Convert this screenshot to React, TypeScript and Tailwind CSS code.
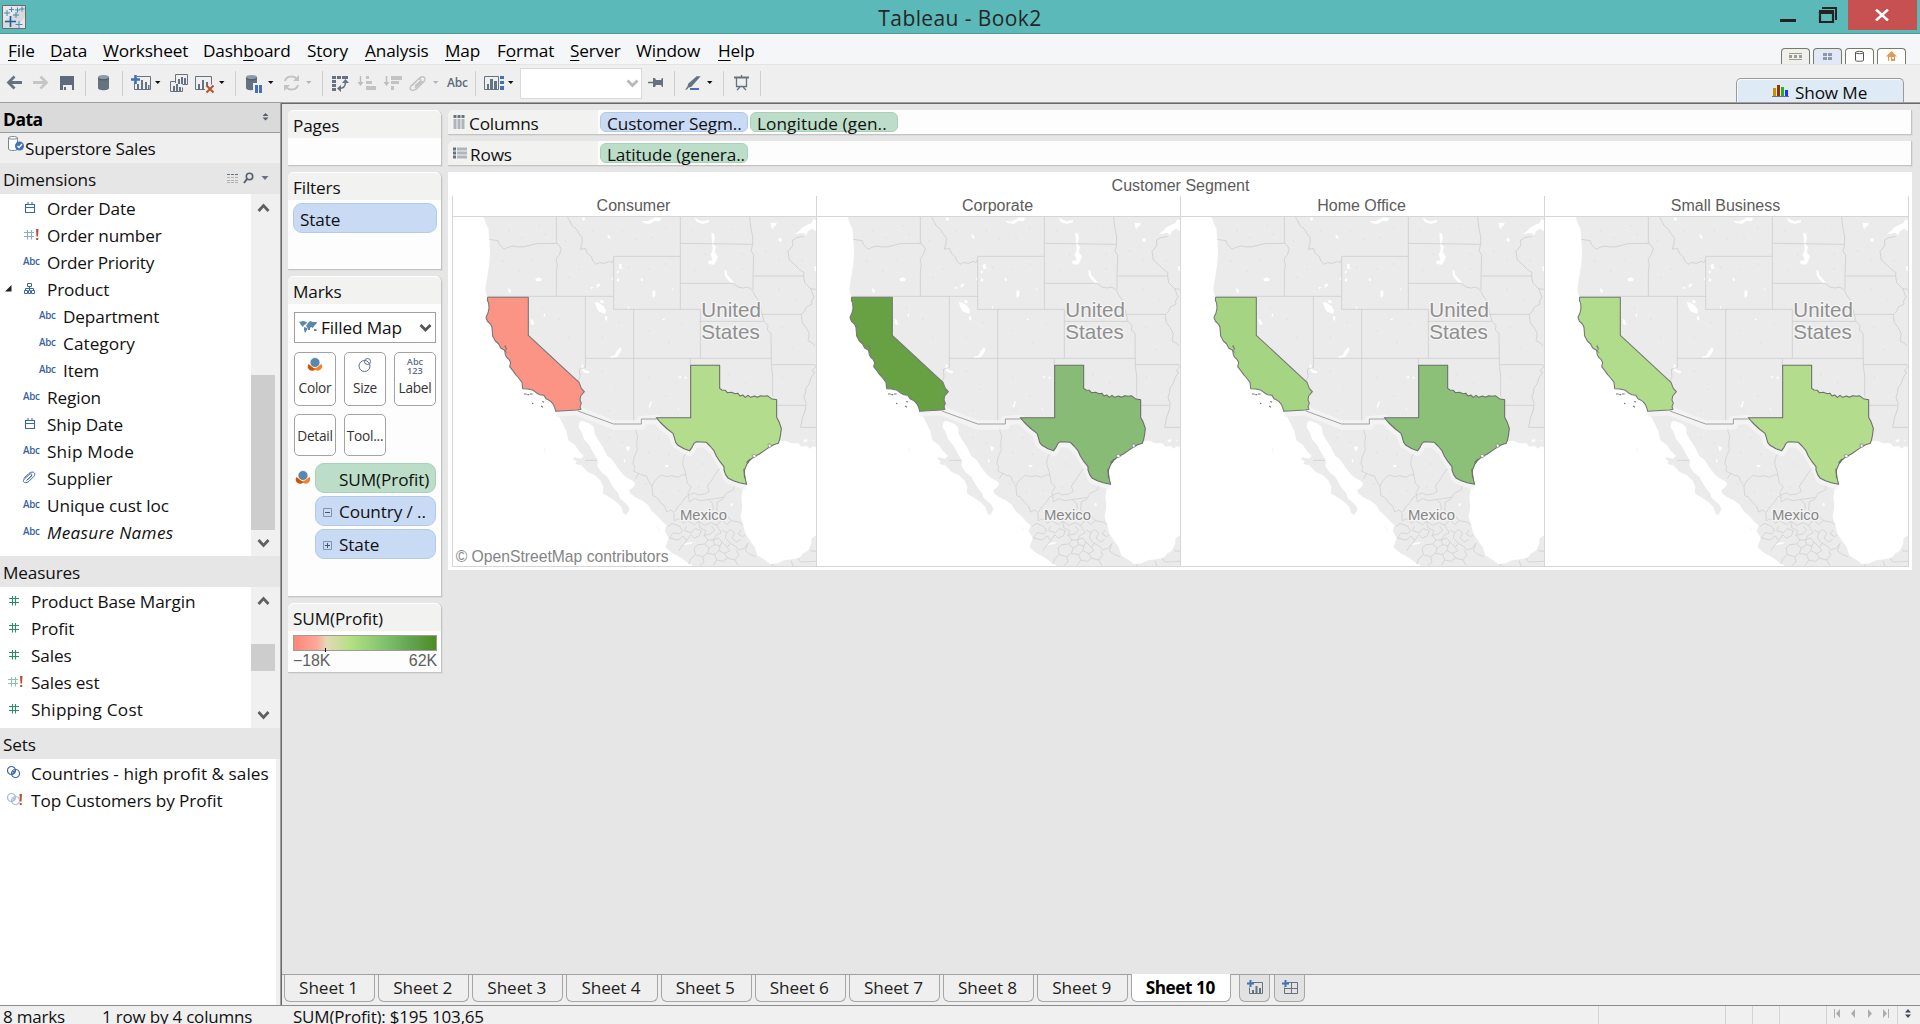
import React from "react";

const UI = "font-['Open_Sans','Noto_Sans',sans-serif]";
const ARIAL = "font-['Liberation_Sans',Arial,sans-serif]";

/* ---------- menu ---------- */

const MENU: [string, string, string, string][] = [
  ["", "F", "ile", "w-[42px]"],
  ["", "D", "ata", "w-[53px]"],
  ["", "W", "orksheet", "w-[100px]"],
  ["Dash", "b", "oard", "w-[104px]"],
  ["S", "t", "ory", "w-[58px]"],
  ["", "A", "nalysis", "w-[80px]"],
  ["", "M", "ap", "w-[52px]"],
  ["F", "o", "rmat", "w-[73px]"],
  ["", "S", "erver", "w-[66px]"],
  ["Wi", "n", "dow", "w-[82px]"],
  ["", "H", "elp", "w-[60px]"],
];

function MenuBar() {
  return (
    <div className="flex h-[31px] items-center border-b border-[#e4e4e6] bg-[#f5f6f8] pl-2">
      {MENU.map(([a, b, c, w]) => (
        <div key={b + c} className={`${w} mt-[3px] shrink-0 whitespace-nowrap text-[17.200px] leading-[22px] tracking-[-0.120px] text-black`}>
          {a}
          <span className="underline decoration-1 underline-offset-[3px]">{b}</span>
          {c}
        </div>
      ))}
      <div className="ml-auto mr-[14px] flex items-end gap-[3px] self-end">
        <ViewTab className="bg-[#efefed]">
          <path d="M8 5.500h13M8 11.500h13" stroke="#9b9c8b" />
          <path d="M8 7h3v3h-3zM13 7h3v3h-3zM18 7h3v3h-3z" fill="#9b9c8b" />
        </ViewTab>
        <ViewTab className="bg-[#e2e8f5]">
          <path d="M10 5h4v3h-4zM15 5h4v3h-4zM10 9h4v3h-4zM15 9h4v3h-4z" fill="#8c99a8" />
        </ViewTab>
        <ViewTab className="bg-white">
          <path d="M10.500 4.500v8c0 1 8 1 8 0v-8M10.500 4.500c0-1.500 8-1.500 8 0s-8 1.500-8 0" stroke="#555" fill="none" />
        </ViewTab>
        <ViewTab className="bg-white">
          <path d="M14.500 3l5.500 5.500h-2v4.500h-7v-4.500h-2z" fill="#e9964f" />
          <path d="M12 9h2v4h-2zM15 9h2v2h-2z" fill="#fff" />
        </ViewTab>
      </div>
    </div>
  );
}

function ViewTab({ className, children }: { className: string; children: React.ReactNode }) {
  return (
    <div className={`h-4 w-[29px] rounded-t-[4px] border border-b-0 border-[#77796b] ${className}`}>
      <svg width="29" height="16" viewBox="1 1 29 16" className="block">{children}</svg>
    </div>
  );
}

/* ---------- toolbar ---------- */

function Tool({ x, w, children }: { x: number; w: number; children?: React.ReactNode }) {
  return (
    <svg width={w} height="37" viewBox={`${x} 65 ${w} 37`} className="block shrink-0" fill="none">
      {children}
    </svg>
  );
}

const Sep = ({ x }: { x: number }) => <path d={`M${x + 0.5} 71v25`} stroke="#cfcfcf" />;
const Caret = ({ x, c = "#111" }: { x: number; c?: string }) => <path d={`M${x - 2.500} 81h5.500l-2.750 3z`} fill={c} />;
const Cylinder = ({ x }: { x: number }) => (
  <>
    <path d={`M${x} 77v11c0 3 11 3 11 0v-11z`} fill="#66727f" />
    <ellipse cx={x + 5.5} cy="77" rx="5.500" ry="2" fill="#8d99a6" />
    <path d={`M${x} 78c1 2.500 10 2.500 11 0`} stroke="#4d5866" />
  </>
);

function Toolbar() {
  return (
    <div className="flex h-[37px] bg-[#efefef]">
      <Tool x={0} w={27}><path d="M22 82.500h-13M14.500 76.500l-6 6 6 6" stroke="#66727f" strokeWidth="2.800" /></Tool>
      <Tool x={27} w={28}><path d="M33 82.500h13M40.500 76.500l6 6-6 6" stroke="#c6c6c6" strokeWidth="2.800" /></Tool>
      <Tool x={55} w={33}>
        <path d="M60 76h14v14h-14z" fill="#5f6b7b" /><path d="M63 85h9v5h-9z" fill="#efefef" /><path d="M64 87h2v3h-2z" fill="#5f6b7b" />
        <Sep x={85} />
      </Tool>
      <Tool x={88} w={37}><Cylinder x={98} /><Sep x={122} /></Tool>
      <Tool x={125} w={40}>
        <path d="M137 76.500h13.500v13h-16v-7" stroke="#66727f" />
        <path d="M137 84h2v5h-2zM141 80h2v9h-2zM145 82h2v7h-2zM148 85h1.500v4h-1.500z" fill="#66727f" />
        <path d="M135.500 75v9M131 79.500h9" stroke="#4370b8" strokeWidth="2.600" /><Caret x={157.5} />
      </Tool>
      <Tool x={165} w={27}>
        <path d="M175.500 83v-8.500h12v10h-5" stroke="#66727f" /><path d="M178 79h2v5h-2zM181 77h2v7h-2zM184 78h2v6h-2z" fill="#66727f" />
        <path d="M175 81.500h-4.500v10h12v-4" stroke="#66727f" /><path d="M173 86h2v5h-2zM176 84h2v7h-2zM179 87h2v4h-2z" fill="#66727f" />
      </Tool>
      <Tool x={192} w={46}>
        <path d="M205 89.500h-9.500v-13h16v8" stroke="#66727f" /><path d="M198 84h2v5h-2zM202 80h2v9h-2zM206 82h2v4h-2z" fill="#66727f" />
        <path d="M206.500 85.500l7 7M213.500 85.500l-7 7" stroke="#b8502f" strokeWidth="2" /><Caret x={221.5} /><Sep x={235} />
      </Tool>
      <Tool x={238} w={40}>
        <Cylinder x={246} /><path d="M253 83h10v10h-10z" fill="#efefef" /><path d="M255 85h3v8h-3zM259 85h3v8h-3z" fill="#4370b8" /><Caret x={270.5} />
      </Tool>
      <Tool x={278} w={47}>
        <path d="M285 81c1-5 9-6 12-2M298 85c-1 5-9 6-12 2" stroke="#c3c3c3" strokeWidth="2" />
        <path d="M299 75v6h-6zM284 91v-6h6z" fill="#c3c3c3" /><Caret x={308.5} c="#b5b5b5" /><Sep x={322} />
      </Tool>
      <Tool x={325} w={28}>
        <path d="M332 76h4v3h-4zM337 76h4v3h-4zM342 76h6v3h-6zM332 80h4v3h-4zM332 84h4v3h-4zM332 88h4v3h-4z" fill="#66727f" />
        <path d="M338.500 88.500c4 0 7-1 7-6" stroke="#66727f" strokeWidth="1.500" /><path d="M342 83l3.500-4 3.500 4zM341 85v7l-4-3.500z" fill="#66727f" />
      </Tool>
      <Tool x={353} w={27}>
        <path d="M360.500 76v8" stroke="#bdbdbd" strokeWidth="1.500" /><path d="M357.500 82h6l-3 4z" fill="#bdbdbd" />
        <path d="M366 76h3v3h-3zM366 81h6v3h-6zM366 86h10v4h-10z" fill="#c3c3c3" />
      </Tool>
      <Tool x={380} w={26}>
        <path d="M386.500 76v8" stroke="#bdbdbd" strokeWidth="1.500" /><path d="M383.500 82h6l-3 4z" fill="#bdbdbd" />
        <path d="M391 76h11v4h-11zM391 81h8v3h-8zM391 86h3v4h-3z" fill="#c3c3c3" />
      </Tool>
      <Tool x={406} w={37}>
        <path d="M415 88l7.500-7M412 85.500l7-7c4-3.500 8-1 5 3l-7 7c-4 3.500-9 1.500-6-2.500l7-6.500c2-1.500 4 0 2 2l-5 4.500" stroke="#bfbfbf" strokeWidth="1.300" /><Caret x={435.5} c="#b5b5b5" />
      </Tool>
      <div className="w-[32px] shrink-0 pl-1 text-[12px] font-semibold leading-[36px] tracking-[-0.200px] text-[#5d6a79]">Abc</div>
      <Tool x={475} w={45}>
        <Sep x={475} /><path d="M484.500 76.500h14v13h-14z" stroke="#66727f" />
        <path d="M487 84h2v5h-2zM490 79h3v10h-3zM494 81h3v8h-3z" fill="#66727f" />
        <path d="M500 76h4v3h-4zM500 81h4v3h-4zM500 86h4v4h-4z" fill="#4370b8" /><Caret x={510.5} />
      </Tool>
      <div className="mt-[3px] flex h-[31px] w-[122px] shrink-0 justify-end border border-[#d9d9d9] bg-white">
        <svg width="16" height="29" viewBox="0 0 16 29" fill="none"><path d="M2.500 11.500l5 5 5-5" stroke="#b9b9b9" strokeWidth="2.800" /></svg>
      </div>
      <Tool x={642} w={35}>
        <path d="M648 82.500h7" stroke="#66727f" strokeWidth="1.500" /><path d="M653 78h2l1 2h5l1-2h1v9h-1l-1-2h-5l-1 2h-2z" fill="#66727f" /><Sep x={674} />
      </Tool>
      <Tool x={677} w={49}>
        <path d="M699 77l-8 9-3 1 1-3 8-7z" fill="#66727f" stroke="#66727f" strokeWidth="1.500" /><path d="M685 90l2-3 1 2z" fill="#66727f" />
        <path d="M690 89h9" stroke="#4370b8" strokeWidth="2" /><Caret x={709.5} /><Sep x={723} />
      </Tool>
      <Tool x={726} w={37}>
        <path d="M734 77.500h15" stroke="#66727f" strokeWidth="2" />
        <path d="M736.500 78v8.500h10v-8.500M741.500 75v2M740 87l-3 3M743 87l3 3" stroke="#66727f" strokeWidth="1.300" /><Sep x={760} />
      </Tool>
      <div className="ml-auto mr-4 mt-[13px] flex h-6 w-[168px] items-end rounded-t-[5px] border border-b-0 border-[#9b9b9b] bg-[#deeaf5] pl-[34px] shadow-[inset_1px_1px_0_#f6fafd]">
        <svg width="18" height="14" viewBox="0 0 18 14" className="mb-[4px]">
          <path d="M2 4h3v8h-3z" fill="#c29200" /><path d="M6 1h3v11h-3z" fill="#a32c00" /><path d="M10 3h3v9h-3z" fill="#22b222" /><path d="M14 6h3v6h-3z" fill="#2430ff" />
          <path d="M1 12.500h17" stroke="#6a7180" />
        </svg>
        <span className="-mb-px ml-[6px] whitespace-nowrap text-[17.200px] leading-[20px] tracking-[-0.150px] text-[#0d0d0d]">Show Me</span>
      </div>
    </div>
  );
}

/* ---------- data pane ---------- */

type IconKind = "date" | "num!" | "abc" | "tree" | "clip" | "num" | "set" | "set!";

function FieldIcon({ kind, green }: { kind: IconKind; green?: boolean }) {
  const c = green ? "#2f8a68" : "#3b66a8";
  if (kind === "abc") return <span className="block w-5 text-[9.800px] font-semibold leading-[14px] tracking-[-0.350px] text-[#3863a3]">Abc</span>;
  return (
    <svg width="20" height="16" viewBox="0 0 20 16" fill="none" className="block">
      {kind === "date" && <path d="M2.500 4.500h9v8h-9zM2 7.500h10M5 2v3M9 2v3" stroke={c} strokeWidth="1.100" />}
      {kind === "num" && <path d="M4.500 3v9.500M7.500 3v9.500M1 5.500h10M1 9.500h10" stroke={c} strokeWidth="1.100" />}
      {kind === "num!" && (
        <>
          <path d="M3.500 3v9.500M7.500 3v9.500M0 5.500h10M0 9.500h10" stroke={green ? "#8fc0ad" : "#8fa9d3"} strokeWidth="1.100" />
          <path d="M12 2h2.500l-0.500 7.500h-1.500zM12.200 11h2v2h-2z" fill="#b8502f" />
        </>
      )}
      {kind === "tree" && <path d="M4.500 2.500h4v3h-4zM1.500 9.500h3v3h-3zM5.500 9.500h2v3h-2zM8.500 9.500h3v3h-3zM6.500 5.500v4M2.500 9.500v-2h8v2" stroke={c} />}
      {kind === "clip" && (
        <path d="M3.500 10.500l5.500-5M0.800 8.500l5-5c3.500-3 8-1 5 3l-5 5c-3.500 2.500-7 0.500-4.500-2.500l5-4.500c2-1.500 3.500 0 2 1.500l-4 4" stroke={c} />
      )}
      {(kind === "set" || kind === "set!") && (
        <g stroke={kind === "set" ? "#3b66a8" : "#a9bbd8"} strokeWidth="1.200">
          <circle cx="4.500" cy="5.500" r="4" /><circle cx="8.500" cy="8.500" r="4" />
          <path d="M5 7l3-1M5.500 9l2.500-2" />
        </g>
      )}
      {kind === "set!" && <path d="M12.500 2h2.500l-0.500 7.500h-1.500zM12.700 11h2v2h-2z" fill="#b8502f" />}
    </svg>
  );
}

function Field({ kind, label, pad, textW, italic, open, green, track = "tracking-[-0.130px]" }: {
  kind: IconKind; label: string; pad: string; textW: string; italic?: boolean; open?: boolean; green?: boolean; track?: string;
}) {
  return (
    <div className={`relative flex h-[27px] items-center ${pad}`}>
      {open && <svg width="7" height="7" className="absolute left-[5px] top-[9px]"><path d="M6.500 0v6.500h-6.500z" fill="#222" /></svg>}
      <div className={`${textW} -mt-px shrink-0`}><FieldIcon kind={kind} green={green} /></div>
      <span className={`whitespace-nowrap text-[17.200px] leading-[26px] text-[#111] ${track} ${italic ? "italic" : ""}`}>{label}</span>
    </div>
  );
}

function ScrollBar({ thumb }: { thumb: string }) {
  return (
    <div className="relative flex w-[29px] shrink-0 flex-col justify-between bg-[#f0f0f0] pl-[6px]">
      <div className={`absolute left-0 w-6 bg-[#cdcdcd] ${thumb}`} />
      <svg width="13" height="12" className="mt-[8px]" fill="none"><path d="M1.500 9l5-5.500 5 5.500" stroke="#606060" strokeWidth="2.800" /></svg>
      <svg width="13" height="12" className="mb-[7px]" fill="none"><path d="M1.500 3l5 5.500 5-5.500" stroke="#606060" strokeWidth="2.800" /></svg>
    </div>
  );
}

function SectionHead({ children }: { children: React.ReactNode }) {
  return <div className="flex h-[31px] shrink-0 items-center bg-[#e6e6e6] pl-[3px] pt-[2px] text-[17.200px] leading-[29px] tracking-[-0.150px] text-[#111]">{children}</div>;
}

function DataPane() {
  return (
    <div className="flex w-[282px] shrink-0 border-r border-[#696969]">
      <div className="flex w-[281px] flex-col border-r border-[#a0a0a0] bg-[#f0f0f0]">
        <div className="flex h-[30px] shrink-0 items-center justify-between border-b border-[#9a9a9a] bg-[#dadada] pl-[3px] pr-[11px]">
          <span className="mt-[2px] text-[17.500px] font-bold leading-[26px] tracking-[-0.500px] text-black">Data</span>
          <svg width="7" height="8" className="mb-[2px]"><path d="M3.500 0l3 3h-6zM3.500 7.500l3-3h-6z" fill="#555f6c" /></svg>
        </div>
        <div className="flex h-[30px] shrink-0 items-center bg-[#efefef] pl-[7px]">
          <svg width="18" height="18" viewBox="0 0 18 18" className="mb-[8px]" fill="none">
            <path d="M1.500 3v11c0 2 9 2 9 0v-11c0-2-9-2-9 0c0 1.500 9 1.500 9 0" stroke="#7d8794" fill="#fff" />
            <circle cx="12.500" cy="11" r="4.500" fill="#4370b8" /><path d="M10.500 11l1.500 1.500 3-3.500" stroke="#fff" strokeWidth="1.200" />
          </svg>
          <span className="mt-[1px] whitespace-nowrap text-[17.200px] leading-[28px] tracking-[-0.220px] text-[#111]">Superstore Sales</span>
        </div>
        <SectionHead>
          Dimensions
          <svg width="44" height="14" viewBox="0 0 44 14" className="mb-[4px] ml-auto mr-[10px]" fill="none">
            <path d="M1 3.500h12" stroke="#66727f" strokeDasharray="3 1" />
            <path d="M1 6.500h12M1 9.500h12M1 11.500h12" stroke="#b2b2b2" strokeDasharray="3 1" />
            <circle cx="23.500" cy="5.500" r="3.200" stroke="#56616f" strokeWidth="1.600" /><path d="M21 8l-3 4" stroke="#56616f" strokeWidth="2" />
            <path d="M35.500 5h7l-3.500 4z" fill="#66727f" />
          </svg>
        </SectionHead>
        <div className="flex h-[362px] shrink-0 bg-white">
          <div className="flex-1 pt-[1px]">
            <Field kind="date" label="Order Date" pad="pl-[23px]" textW="w-6" />
            <Field kind="num!" label="Order number" pad="pl-[24px]" textW="w-[23px]" />
            <Field kind="abc" label="Order Priority" pad="pl-[23px]" textW="w-6" track="tracking-[-0.220px]" />
            <Field kind="tree" label="Product" pad="pl-[23px]" textW="w-6" open />
            <Field kind="abc" label="Department" pad="pl-[39px]" textW="w-6" />
            <Field kind="abc" label="Category" pad="pl-[39px]" textW="w-6" track="tracking-[0.050px]" />
            <Field kind="abc" label="Item" pad="pl-[39px]" textW="w-6" />
            <Field kind="abc" label="Region" pad="pl-[23px]" textW="w-6" />
            <Field kind="date" label="Ship Date" pad="pl-[23px]" textW="w-6" />
            <Field kind="abc" label="Ship Mode" pad="pl-[23px]" textW="w-6" track="tracking-[0.200px]" />
            <Field kind="clip" label="Supplier" pad="pl-[23px]" textW="w-6" />
            <Field kind="abc" label="Unique cust loc" pad="pl-[23px]" textW="w-6" track="tracking-[-0.080px]" />
            <Field kind="abc" label="Measure Names" pad="pl-[23px]" textW="w-6" italic track="tracking-[0.300px]" />
          </div>
          <ScrollBar thumb="top-[181px] h-[155px]" />
        </div>
        <SectionHead>Measures</SectionHead>
        <div className="flex h-[141px] shrink-0 bg-white">
          <div className="flex-1 pt-[1px]">
            <Field kind="num" label="Product Base Margin" pad="pl-[8px]" textW="w-[23px]" green />
            <Field kind="num" label="Profit" pad="pl-[8px]" textW="w-[23px]" green />
            <Field kind="num" label="Sales" pad="pl-[8px]" textW="w-[23px]" green />
            <Field kind="num!" label="Sales est" pad="pl-[8px]" textW="w-[23px]" green />
            <Field kind="num" label="Shipping Cost" pad="pl-[8px]" textW="w-[23px]" green track="tracking-[0.200px]" />
          </div>
          <ScrollBar thumb="top-[57px] h-[27px]" />
        </div>
        <SectionHead>Sets</SectionHead>
        <div className="mr-1 flex-1 bg-white pt-[1px]">
          <Field kind="set" label="Countries - high profit & sales" pad="pl-[7px]" textW="w-6" track="tracking-[0.030px]" />
          <Field kind="set!" label="Top Customers by Profit" pad="pl-[7px]" textW="w-6" track="tracking-[-0.090px]" />
        </div>
      </div>
    </div>
  );
}

/* ---------- cards ---------- */

function Card({ title, className, children }: { title: string; className: string; children?: React.ReactNode }) {
  return (
    <div className={`flex w-[154px] shrink-0 flex-col rounded-t-[6px] border-b border-r border-[#c3c3c3] bg-[#fdfdfd] shadow-[1px_1px_0_#dcdcdc] ${className}`}>
      <div className="h-[28px] shrink-0 rounded-t-[6px] border-t border-white bg-[#f2f2f0] pl-[5px] text-[17.200px] leading-[30px] tracking-[-0.150px] text-[#111]">{title}</div>
      {children}
    </div>
  );
}

function Pill({ label, className, icon }: { label: string; className: string; icon?: React.ReactNode }) {
  return (
    <div className={`flex shrink-0 items-center whitespace-nowrap border text-[17.200px] tracking-[-0.120px] text-[#111] ${className}`}>
      {icon}
      {label}
    </div>
  );
}

const BLUE = "bg-[#c9daf5] border-[#b3c9ea]";
const GREEN = "bg-[#bcdec9] border-[#a9d0b8]";

const ColorDots = () => (
  <svg width="16" height="16" viewBox="0 0 16 16">
    <path d="M1.500 7a4.200 4.200 0 1 0 7 5z" fill="#d35400" />
    <path d="M14.500 7a4.200 4.200 0 1 1 -7.500 4.500z" fill="#f58025" />
    <circle cx="8" cy="5.500" r="5" fill="#5a88ad" stroke="#fdfdfd" strokeWidth="0.800" />
  </svg>
);

function MarkButton({ label, className, children }: { label: string; className: string; children?: React.ReactNode }) {
  return (
    <div className={`flex w-[42px] flex-col items-center rounded-[5px] border border-[#a3a3a3] bg-white ${className}`}>
      {children}
      <span className="whitespace-nowrap text-[13.700px] leading-[18px] tracking-[-0.250px] text-[#333]">{label}</span>
    </div>
  );
}

const Box = ({ plus }: { plus?: boolean }) => (
  <svg width="9" height="9" className="mr-[7px]" fill="none">
    <path d="M0.500 0.500h8v8h-8z" stroke="#8492ab" /><path d={plus ? "M2 4.500h5M4.500 2v5" : "M2 4.500h5"} stroke="#44536b" />
  </svg>
);

function CardColumn() {
  return (
    <div className="flex w-[154px] shrink-0 flex-col gap-[6px]">
      <Card title="Pages" className="h-[56px]" />
      <Card title="Filters" className="h-[98px]">
        <Pill label="State" className={`ml-[5px] mt-[3px] h-[30px] w-[144px] rounded-[9px] pl-[6px] pt-[3px] ${BLUE}`} />
      </Card>
      <Card title="Marks" className="h-[321px]">
        <div className="ml-[6px] mt-[8px] flex h-[31px] w-[142px] shrink-0 items-center border border-[#a0a0a0] bg-white pl-[4px]">
          <svg width="19" height="12" viewBox="0 0 19 12" fill="#5a88ad" className="mb-[2px]">
            <path d="M0 1l4-1 4 1-1 2-2 1-1 2-2-2-1-2zM5 6l3 1 0 2-2 3-1-3zM9 2l2-2 3 1 4 0-1 2-2 2-1 2-2-1-1 1 0 2-2 0-1-3-1-1zM15 8l2 0 1 2-3 0z" />
          </svg>
          <span className="ml-[3px] mt-[1px] text-[17.200px] tracking-[-0.120px] text-[#111]">Filled Map</span>
          <svg width="13" height="12" className="ml-auto mr-[3px]" fill="none"><path d="M1.500 3l5 5 5-5" stroke="#555" strokeWidth="2.800" /></svg>
        </div>
        <div className="ml-[6px] mt-[9px] flex gap-2">
          <MarkButton label="Color" className="h-[54px] justify-between pb-[8px] pt-[4px]"><ColorDots /></MarkButton>
          <MarkButton label="Size" className="h-[54px] justify-between pb-[8px] pt-[4px]">
            <svg width="16" height="16" fill="none" stroke="#5f6f8a"><circle cx="7.500" cy="9" r="5.500" /><circle cx="10.500" cy="4.500" r="3" /></svg>
          </MarkButton>
          <MarkButton label="Label" className="h-[54px] justify-between pb-[8px] pt-[4px]">
            <span className="flex flex-col text-center text-[9.200px] font-semibold text-[#5f6f8a]">
              <span className="h-[9px] leading-[9px]">Abc</span>
              <span className="h-[9px] leading-[9px]">123</span>
            </span>
          </MarkButton>
        </div>
        <div className="ml-[6px] mt-2 flex gap-2">
          <MarkButton label="Detail" className="h-[42px] justify-center pt-[2px]" />
          <MarkButton label="Tool..." className="h-[42px] justify-center pt-[2px]" />
        </div>
        <div className="mt-[7px] flex flex-col gap-[3px]">
          <div className="flex items-center pl-[7px]">
            <ColorDots />
            <Pill label="SUM(Profit)" className={`ml-[4px] h-[30px] w-[121px] rounded-[9px] pl-[23px] pt-[3px] ${GREEN}`} />
          </div>
          <Pill label="Country / .." icon={<Box />} className={`ml-[27px] h-[30px] w-[121px] rounded-[9px] pl-[7px] pt-[2px] ${BLUE}`} />
          <Pill label="State" icon={<Box plus />} className={`ml-[27px] h-[30px] w-[121px] rounded-[9px] pl-[7px] pt-[2px] ${BLUE}`} />
        </div>
      </Card>
      <Card title="SUM(Profit)" className="h-[70px]">
        <div className="ml-[5px] mt-[4px] flex h-4 w-[144px] items-end border border-[#9d9d93] bg-[linear-gradient(90deg,#fe8878_0%,#fba79a_16%,#e5d8b8_23%,#b3e084_40%,#7fc06b_65%,#63a452_82%,#4c8c25_100%)]">
          <div className="-mb-[2px] ml-[31px] h-[4px] w-px bg-black" />
        </div>
        <div className={`ml-[5px] flex w-[144px] justify-between pt-[1px] text-[16px] leading-[17px] tracking-[-0.100px] text-[#5f5f5f] ${ARIAL}`}>
          <span>−18K</span><span>62K</span>
        </div>
      </Card>
    </div>
  );
}

function Shelf({ label, icon, children }: { label: string; icon: React.ReactNode; children: React.ReactNode }) {
  return (
    <div className="flex h-[25px] shrink-0 items-stretch gap-[2px] rounded-tl-[6px] border-b border-r border-[#c3c3c3] bg-[#fdfdfd] shadow-[1px_1px_0_#dcdcdc]">
      <div className="flex w-[150px] items-center rounded-tl-[6px] bg-[#f2f2f0] pl-[5px] text-[17.200px] leading-[24px] tracking-[-0.150px] text-[#111]">
        {icon}
        <span className="mt-[3px]">{label}</span>
      </div>
      {children}
    </div>
  );
}

/* ---------- map ---------- */

const CA_COAST =
  "L323 604L321 595L316 583L309 575L300 569L294 566L288 556L275 554L266 549L256 541L240 537L224 536L222 517L212 504L203 494L194 481L185 470L188 458L184 449L177 443L172 434L170 421L158 414L152 402L142 393L134 378L132 352L128 343L118 333L114 322L120 309L123 295L122 280L118 270Z";
const CA = "M119 262H241V376L393 517L400 535L409 545L398 558L396 570L400 580L396 590L399 598L388 600" + CA_COAST;
const TX =
  "M728 466H815V535L822 540L832 541L838 548L850 547L862 551L870 550L876 558L884 555L892 562L900 556L908 562L920 558L928 562L938 557L950 559L958 557L970 566L986 569V622L993 635L1000 655L998 672L995 688L991 700L977 704L966 710L950 721L934 732L918 740L906 750L896 763L889 782L890 798L893 812L896 823L874 818L856 812L841 805L833 794L828 780V770L816 755L805 738L798 722L786 708L775 697L760 696L745 695L738 700L732 712L725 722L708 716L690 706L683 697L679 682L675 670L658 657L645 645L636 636L625 623H728Z";
const LAND =
  "M107 21L113 40L121 55L124 88L126 120L124 160L118 200L112 235L114 250L119 262L122 280L123 295L120 309L114 322L118 333L128 343L134 378L152 402L170 421L177 443L188 458L185 470L203 494L222 517L224 536L256 541L275 554L294 566L309 575L323 604L334 622L345 642L356 665L360 690L380 704L392 722L408 738L398 746L378 741L376 748L386 753L382 762L400 766L418 785L440 795L458 812L466 830L464 850L484 862L506 877L520 890L525 908L534 916L545 898L538 884L524 872L515 864L511 850L500 838L490 822L478 800L460 786L448 768L450 752L436 728L424 706L408 688L402 668L392 652L393 640L400 632L424 640L438 652L440 672L452 692L464 710L478 738L492 748L508 772L524 793L538 804L556 814L562 822L554 834L544 840L546 850L562 862L584 872L600 885L610 902L628 918L644 936L656 946L650 962L662 984L656 1002L652 1012L674 1030L700 1044L716 1056L735 1068H1104V21Z";
const GULF =
  "M896 823L884 838L880 860L883 890L878 920L886 948L893 972L906 992L920 1012L928 1036L950 1050L966 1062L990 1060L1010 1050L1036 1048L1054 1044L1066 1030L1080 1022L1090 1000V986L1104 976V712L1094 708L1086 716L1076 708L1060 710L1052 700L1030 700L1012 692L994 694L966 710L934 732L906 750L889 782Z";

const STATE_LINES =
  "M124 88L136 90L150 92L155 104L168 118L180 112L195 108L210 111L230 110L248 105L265 101L328 100M325 21V100M328 100L340 116L334 134L325 146V158L328 162L326 180L325 190V259M119 259H497M358 21L366 34L372 47L386 58L392 70L403 84L402 100L397 118L412 115L418 130L430 140L434 152L444 163L454 158L470 160L484 154L492 158L497 148M497 139H697M497 139V298H757M697 21V298M697 100L914 103M697 220H855L872 232L886 234L896 231L908 236L915 245L922 258L932 272L938 292L940 305L946 325L948 334L960 346L958 360L969 370L970 464M905 21L908 50L914 80V103L909 122L917 135L915 198H1067M915 198V240M412 259V472M557 298V642M412 445H970M757 298V445M757 334H948M727 445V466M940 313H1060M970 464H1100M970 464L974 500V560M986 586H1070M1067 80L1060 80L1046 83L1034 90L1034 108L1020 124L1024 150L1040 164L1054 178L1068 188L1067 199L1070 218L1088 236L1104 238M1088 236L1098 262L1090 274L1092 282L1074 292L1070 304L1060 313L1063 338L1074 352L1084 372L1080 392L1094 400L1102 408M1100 464L1104 470L1092 482L1100 486L1088 506L1084 520L1074 534L1072 550L1068 562L1074 580L1072 600L1064 622L1058 652H1104M412 472L394 478L396 500L390 515";
const MEX_LINES =
  "M562 645L564 664L569 680L566 700L568 720L558 742L555 762L560 770L558 784L572 790L562 806M412 751H447M572 790L584 796L596 798L602 814L612 830L620 812L632 802L640 795L656 800L672 797L690 802L704 794L714 796M718 722L706 744L704 762L712 786L714 796L718 820L730 830L720 848L722 856M612 830L614 856L626 862L640 880L650 888L656 906L668 900L678 908L678 932M722 856L712 862L700 880L690 890L680 906M722 856L738 848L750 855L770 852L784 844L778 828L790 812L804 790L812 778L826 772M722 856L724 876L740 866L758 872L784 868L800 866L826 862M780 868L794 880L796 896L786 906L792 920L808 928M860 818L856 840L834 850L826 866L808 876L806 900L820 912L836 916L850 932L872 936L886 944M678 932L694 926L706 940L718 932L740 944L752 934L770 946L790 938L806 946L822 930L836 944L850 932M660 950L672 940L694 948L704 962L694 972L676 968L664 984L690 990L706 978L716 992M716 948L710 962L730 968L742 956L760 962L754 978L738 984L728 974L716 992L702 1008L692 1022M752 934L756 954L774 962L768 976L788 972L800 960L790 948M768 976L780 990L770 1002L784 1014L800 1004L796 990L812 984L822 996L816 1008L800 1004M780 990L796 990L804 976L820 968L812 956L806 946M822 960L836 968L848 958L860 970L852 984L866 996L878 988M836 968L832 984L846 1000L838 1012L822 996M846 1000L862 1008L872 1020L890 1014L900 1000M784 1014L778 1030L764 1040L742 1034L728 1046L722 1062M742 1034L738 1014L750 1004L770 1002M778 1030L800 1034L812 1022L816 1008M812 1022L830 1030L846 1022L838 1012M800 1034L806 1050L826 1054L838 1044L830 1030M838 1044L860 1050L872 1036L866 1022M860 1050L870 1066M900 1000L892 1022L908 1034L924 1040M880 960L870 972L884 980L892 974M764 1040L768 1056L756 1066M806 1050L796 1066M972 1062L976 1068M1030 1052L1034 1068M1050 1044L1058 1056L1104 1054M1086 1022L1104 1024";
const LAKES =
  "M440 276L452 278L466 288L474 300L472 312L462 308L452 304L446 294ZM456 270L468 274L466 280L458 278ZM470 320L478 318L478 332L472 330ZM516 412L520 416L518 426L506 442L488 444L486 440L500 436L506 424ZM512 165L522 160L520 170L526 174L514 178ZM507 182H513L511 190H506ZM508 205L514 208L512 216L506 212ZM578 205H584V213H579ZM614 240L622 243L622 256L617 264L613 258ZM672 234L676 236L674 244ZM644 326H650V330H644ZM580 33L598 34L612 28L622 22L640 24L634 34L618 33L606 42L588 40ZM740 22L752 30L764 34L782 30L784 36L764 42L746 36ZM790 68L798 70L801 86L796 100L804 112L800 126L810 140L804 154L798 164L782 162L780 154L794 150L788 134L794 120ZM830 180L836 184L838 196L848 206L858 218L850 220L838 208L830 196ZM968 38L976 40L986 38L984 48L976 50L976 58L969 52ZM992 84L1002 86L1000 96L992 94ZM262 206L272 202L282 206L278 214L264 214ZM180 234L188 240L188 248L182 248ZM248 326L254 330L260 342L252 346L248 338ZM288 308L292 314L290 320H287ZM402 460L408 470L408 480L424 484L422 490L410 488L400 480ZM446 224L454 220L456 226L446 234ZM428 232L438 230L430 238ZM478 72L486 78L488 88L480 82ZM492 202L496 206L492 212ZM540 288L544 292L540 300ZM690 500L700 498L698 506ZM710 500H716V506H710ZM608 574H612L608 588L602 596L604 586ZM690 594L694 600H689ZM534 708L546 712L544 720L538 724ZM527 746L534 752L528 758ZM650 766L662 764L660 770L652 772ZM703 1004L718 998L734 996L732 1000L716 1004ZM848 880H854V888H848ZM404 22L412 24L408 32L402 30ZM1098 170L1104 168V184L1100 182ZM168 294L174 298L170 302Z";
const SUPERIOR = "M1040 73L1054 62L1064 52L1078 44L1090 40L1096 28L1104 30V64L1092 56L1080 64L1074 76L1066 68Z";
const SPECKS =
  "M180 60l6 4M220 80l4 6M270 50l6-4M160 150l8 6M210 180l5 6M250 150l6-3M290 70l4 6M350 90l5 6M360 200l6 4M390 180l4-6M430 60l6 5M520 60l6 4M560 90l6-4M610 80l5 5M650 50l6 4M540 170l6 4M600 180l5-5M650 160l6 5M730 60l6 4M770 130l5 6M850 60l5-4M880 130l6 4M740 180l5 4M880 180l5-5M950 120l6 5M990 150l5-4M1060 150l5 5M280 290l6 5M330 330l5-5M360 380l6 5M460 380l5 5M510 340l6-4M600 360l5 5M660 400l6-4M700 340l5 4M460 480l5 6M500 540l6-4M600 500l5 5M650 560l6-4M480 600l6 4M840 490l5 5M890 520l6-4M1000 500l5 5M1030 420l6-4M1000 350l5 5M1040 270l6 4M990 240l5-5M630 680l5 6M600 730l6-4M660 730l5 5M690 840l6 4M640 850l5-5M760 760l6 4M750 830l5 5M480 680l6 5M520 700l5-5M590 820l6 4";

type Segment = { name: string; ca: string; tx: string };
const SEGMENTS: Segment[] = [
  { name: "Consumer", ca: "#fb9484", tx: "#b3dc8d" },
  { name: "Corporate", ca: "#68a044", tx: "#87bb76" },
  { name: "Home Office", ca: "#a5d582", tx: "#8cc079" },
  { name: "Small Business", ca: "#b1dc8b", tx: "#b3dc8d" },
];

function SegmentMap({ seg, first }: { seg: Segment; first: boolean }) {
  return (
    <svg width="363" height="349" viewBox="15 21 1089 1047" className="block" fill="none" strokeLinejoin="round">
      <path d={LAND} fill="#ebebeb" />
      <path d={SPECKS} stroke="#e4e4e4" strokeWidth="4" />
      <path d={GULF} fill="#fff" />
      <path d={SUPERIOR} fill="#fff" />
      <path d={LAKES} fill="#fff" />
      <path d="M1066 690l10-4 4 8-10 4zM1090 690l8-2v8zM288 714l4 6-2 6M500 1040l2 3M628 950l8 12" fill="#fff" stroke="#ededed" strokeWidth="2" />
      <path d={STATE_LINES} stroke="#cacaca" strokeWidth="2.200" />
      <path d={MEX_LINES} stroke="#cdcdcd" strokeWidth="2.200" />
      <path
        d="M323 606L388 602L497 645H580V632L625 628L645 648L675 672L683 700L725 724L740 698L775 700L800 725L828 772L841 807L896 826"
        stroke="#f4f4f4" strokeOpacity="0.850" strokeWidth="28"
      />
      <path d="M390 603L497 642H580V627H625" stroke="#8f8f8f" strokeWidth="2.500" />
      <path d={CA} fill={seg.ca} stroke="#777" strokeWidth="3.200" />
      <path d={TX} fill={seg.tx} stroke="#6c6c6c" strokeWidth="3.200" />
      <path d="M168 408l6 4 2 6-6 4 8 6M172 406l2 10" stroke="#777" strokeWidth="2.500" />
      <path d="M228 552h8M238 554h6M246 552h8M252 580l4 1M283 574l5 3M279 588l6 4" stroke="#777" strokeWidth="3.500" />
      <path d="M912 736l8-3 6 6-8 5zM960 702l8 0 2 8-8 3z" fill="#fff" stroke="#777" strokeWidth="2" />
      <path d="M888 776l2 28M896 758l10-10" stroke="#707070" strokeWidth="4" />
      <g className={ARIAL} stroke="#f4f4f4" strokeWidth="8" style={{ paintOrder: "stroke" }}>
        <text x="760" y="321" fontSize="61.800" fill="#8f8f8f">United</text>
        <text x="760" y="388" fontSize="61.800" fill="#8f8f8f">States</text>
        <text x="696" y="931" fontSize="44.500" fill="#868686">Mexico</text>
      </g>
      {first && <text x="23" y="1055" fontSize="47.100" fill="#858585" className={ARIAL}>© OpenStreetMap contributors</text>}
    </svg>
  );
}

function Viz() {
  return (
    <div className={`h-[398px] shrink-0 bg-white pl-[4px] pr-[3px] text-[16px] text-[#5c5c5c] ${ARIAL}`}>
      <div className="h-6 text-center leading-[27px]">Customer Segment</div>
      <div className="grid grid-cols-4 border-b border-r border-[#d6d6d6]">
        {SEGMENTS.map((s, i) => (
          <div key={s.name} className="border-l border-[#d6d6d6]">
            <div className="h-[21px] border-b border-[#d6d6d6] pr-[2px] text-center leading-[19px]">{s.name}</div>
            <SegmentMap seg={s} first={i === 0} />
          </div>
        ))}
      </div>
    </div>
  );
}

/* ---------- sheet tabs and status bar ---------- */

function SheetTabs() {
  const tab = "flex h-[27px] shrink-0 items-center justify-center rounded-b-[6px] border border-t-0 border-[#a6a6a6] whitespace-nowrap";
  return (
    <div className="flex h-[31px] shrink-0 items-start border-t border-[#a0a0a0] bg-[#efefef] pl-[2px] text-[17.200px] tracking-[-0.100px] text-[#222]">
      <div className="flex gap-[3px]">
        {[1, 2, 3, 4, 5, 6, 7, 8, 9].map((n) => (
          <div key={n} className={`${tab} w-[91.150px] bg-[#efefef] pr-[2px]`}>Sheet {n}</div>
        ))}
        <div className={`${tab} -mt-px h-[28px] w-[100px] bg-white pr-[2px] font-bold tracking-[-0.450px] text-black`}>Sheet 10</div>
      </div>
      <div className={`${tab} ml-[8px] w-[31px] bg-[#e2e2e2]`}>
        <svg width="16" height="16" fill="none"><path d="M5 2.500h10.500v11h-13v-6" stroke="#66727f" /><path d="M5 10h2v3h-2zM8.500 6h2v7h-2zM12 8h2v5h-2z" fill="#66727f" /><path d="M3.500 0v7M0 3.500h7" stroke="#4370b8" strokeWidth="2" /></svg>
      </div>
      <div className={`${tab} ml-[4px] w-[31px] bg-[#e2e2e2]`}>
        <svg width="16" height="16" fill="none"><path d="M5 2.500h10.500v11h-13v-6M9.500 3v10.500M3 8.500h12" stroke="#66727f" /><path d="M3.500 0v7M0 3.500h7" stroke="#4370b8" strokeWidth="2" /></svg>
      </div>
    </div>
  );
}

function StatusBar() {
  const cell = "h-full shrink-0 border-l border-[#d4d4d4]";
  return (
    <div className="flex h-[19px] shrink-0 overflow-hidden border-t border-[#8c8c8c] bg-[#f0f0f0] pl-[3px] text-[17px] leading-[21px] tracking-[-0.200px] text-[#111]">
      <div className="w-[99px] shrink-0">8 marks</div>
      <div className="w-[191px] shrink-0">1 row by 4 columns</div>
      <div className="shrink-0">SUM(Profit): $195 103,65</div>
      <div className="ml-auto flex h-full">
        <div className={`${cell} w-[127px]`} />
        <div className={`${cell} w-[27px]`} />
        <div className={`${cell} w-[27px]`} />
        <div className={`${cell} w-[47px]`} />
        <div className={`${cell} w-[71px]`}>
          <svg width="70" height="17" viewBox="1827 1006 70 17" fill="#adadad">
            <path d="M1834 1009h1v9h-1zM1840 1009v9l-4-4.500zM1855 1009v9l-4-4.500zM1868 1009v9l4-4.500zM1883 1009v9l4-4.500zM1888 1009h1v9h-1z" />
          </svg>
        </div>
        <div className={`${cell} w-[23px]`}>
          <svg width="20" height="17" fill="#3f4a5a"><path d="M10 3l3 3.500h-6zM10 12l3-3.500h-6z" /></svg>
        </div>
      </div>
    </div>
  );
}

export default function App() {
  return (
    <div className={`flex h-[1024px] w-[1920px] flex-col overflow-hidden bg-[#f0f0f0] ${UI}`}>
      <div className="relative flex h-[34px] shrink-0 items-start justify-between border-b border-[#4a9a9b] bg-[#5bbab9]">
        <svg width="24" height="24" viewBox="0 0 24 24" className="ml-[2px] mt-[5px]">
          <path d="M0.500 0.500h23v23h-23z" fill="#e6e8ea" stroke="#6e6a6a" />
          <path d="M23 1v10l-8 12h-14v-6z" fill="#d2d4d6" opacity="0.700" />
          <path d="M8.500 11v11M3 16.500h11" stroke="#1f5f98" strokeWidth="1.600" />
          <path d="M17 16v7M13.500 19.500h7M5 5v6M2 8h6M14 7v6M11 10h6M9.500 2v5M7 4.500h5M15.500 2.500v5M13 5h5M20 1.500v5M17.500 4h5" stroke="#4f86b5" />
        </svg>
        <div className="absolute inset-x-0 top-0 text-center text-[21px] leading-[37px] tracking-[0.400px] text-[#262626]">Tableau - Book2</div>
        <div className="relative flex items-start">
          <svg width="68" height="30" viewBox="1780 0 68 30" fill="none">
            <path d="M1780 20.500h16" stroke="#222" strokeWidth="3" />
            <path d="M1820 13v9h13v-9z" stroke="#222" strokeWidth="2.200" /><path d="M1819 10h15v4h-15z" fill="#222" />
            <path d="M1822 8h14v12" stroke="#222" strokeWidth="2" />
          </svg>
          <div className="mr-[3px] flex h-[30px] w-[69px] items-center justify-center bg-[#c75050] pr-[1px]">
            <svg width="14" height="12" fill="none"><path d="M1 0.500l12 11M13 0.500l-12 11" stroke="#fff" strokeWidth="2.500" /></svg>
          </div>
        </div>
      </div>
      <MenuBar />
      <Toolbar />
      <div className="flex min-h-0 flex-1 border-t border-[#a0a0a0]">
        <DataPane />
        <div className="flex min-w-0 flex-1 flex-col border-t border-[#696969] bg-[#e6e6e6]">
          <div className="flex min-h-0 flex-1 gap-[6px] pl-[6px] pr-[8px] pt-[6px]">
            <CardColumn />
            <div className="flex min-w-0 flex-1 flex-col">
              <Shelf label="Columns" icon={<svg width="12" height="14" className="mr-[4px]"><path d="M0.500 0h3v3h-3zM4.500 0h3v3h-3zM8.500 0h3v3h-3z" fill="#66727f" /><path d="M0.500 4h3v10h-3zM4.500 4h3v10h-3zM8.500 4h3v10h-3z" fill="#b0b5bd" /></svg>}>
                <Pill label="Customer Segm.." className={`mt-[2px] h-[20px] w-[148px] rounded-[6px] pl-[6px] pt-[3px] ${BLUE}`} />
                <Pill label="Longitude (gen.." className={`mt-[2px] h-[20px] w-[148px] rounded-[6px] pl-[6px] pt-[3px] tracking-[0.080px] ${GREEN}`} />
              </Shelf>
              <div className="mt-[6px]">
                <Shelf label="Rows" icon={<svg width="14" height="12" className="mr-[3px]"><path d="M0 0.500h3v3h-3zM0 4.500h3v3h-3zM0 8.500h3v3h-3z" fill="#66727f" /><path d="M4 0.500h10v3h-10zM4 4.500h10v3h-10zM4 8.500h10v3h-10z" fill="#b0b5bd" /></svg>}>
                  <Pill label="Latitude (genera.." className={`mt-[2px] h-[20px] w-[148px] rounded-[6px] pl-[6px] pt-[3px] ${GREEN}`} />
                </Shelf>
              </div>
              <div className="mt-[6px]"><Viz /></div>
            </div>
          </div>
          <SheetTabs />
        </div>
      </div>
      <StatusBar />
    </div>
  );
}
